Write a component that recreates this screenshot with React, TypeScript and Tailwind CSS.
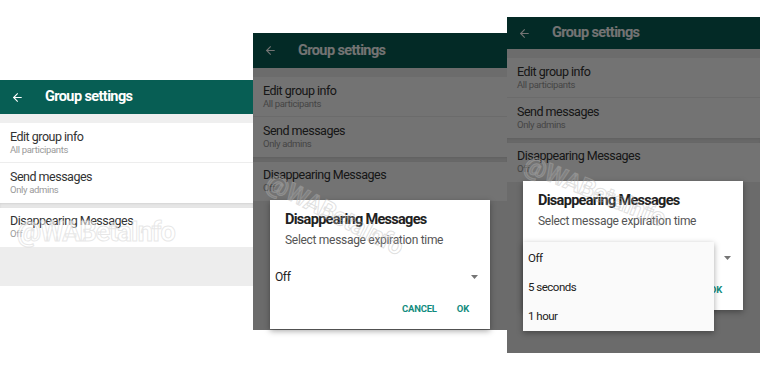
import { ArrowLeft } from "lucide-react";

const font = "font-['Liberation_Sans_Narrow','Roboto',sans-serif]";

function Row({ title, sub, divider }: { title: string; sub: string; divider?: boolean }) {
  return (
    <div className={`h-[40px] pl-[10px] pt-[6px] ${divider ? "border-b border-[#ededed]" : ""}`}>
      <div className="text-[12.5px] leading-[16px] text-[#333333] tracking-[-0.5px]">{title}</div>
      <div className="text-[9.5px] leading-[12px] text-[#9a9a9a] mt-[-1px] tracking-[-0.35px]">{sub}</div>
    </div>
  );
}

function Watermark({ className }: { className: string }) {
  return (
    <div
      className={`absolute whitespace-nowrap font-bold leading-none pointer-events-none z-20 ${className}`}
    >
      @WABetaInfo
    </div>
  );
}

function Dropdown() {
  return (
    <svg width="7" height="4" viewBox="0 0 7 4">
      <polygon points="0,0 7,0 3.5,4" fill="#757575" />
    </svg>
  );
}

function Dialog({ className, menu }: { className: string; menu?: boolean }) {
  return (
    <div className={`absolute w-[220px] h-[129px] bg-white shadow-[0_2px_6px_rgba(0,0,0,0.35)] z-10 ${className}`}>
      <div className="pt-[11px] pl-[15px] text-[14.5px] leading-[18px] font-bold text-[#212121] tracking-[-0.7px]">
        Disappearing Messages
      </div>
      <div className="mt-[3px] pl-[15px] text-[12px] leading-[16px] text-[#555555] tracking-[-0.3px]">
        Select message expiration time
      </div>
      <div className="mt-[17px] h-[24px] pl-[5px] pr-[12px] flex items-center justify-between">
        <span className="text-[12px] text-[#212121] tracking-[-0.4px]">Off</span>
        <Dropdown />
      </div>
      <div className="mt-[10px] h-[20px] pr-[21px] flex items-center justify-end gap-[20px] text-[9.5px] font-bold text-[#128c7e] tracking-[-0.2px]">
        <span>CANCEL</span>
        <span>OK</span>
      </div>
      {menu && (
        <div className="absolute left-0 top-[61px] w-[191px] h-[89px] bg-[#fafafa] shadow-[0_2px_6px_rgba(0,0,0,0.35)] py-[2px]">
          {["Off", "5 seconds", "1 hour"].map((item) => (
            <div key={item} className="h-[29px] flex items-center pl-[5px] text-[11.5px] text-[#212121] tracking-[-0.5px]">
              {item}
            </div>
          ))}
        </div>
      )}
    </div>
  );
}

function Screen({
  className,
  headerH,
  dim,
  children,
}: {
  className: string;
  headerH: string;
  dim?: boolean;
  children?: React.ReactNode;
}) {
  return (
    <div className={`relative shrink-0 flex flex-col bg-[#ededed] ${className}`}>
      <div className={`${headerH} bg-[#075e54] flex items-center pl-[11px] shrink-0`}>
        <ArrowLeft size={13} color="white" strokeWidth={2} />
        <span className="ml-[21px] text-[14.5px] font-bold text-white tracking-[-0.6px]">Group settings</span>
      </div>
      <div className="h-[9px] bg-[#efefef] shrink-0" />
      <div className="bg-white shrink-0">
        <Row title="Edit group info" sub="All participants" divider />
        <Row title="Send messages" sub="Only admins" />
      </div>
      <div className="h-[5px] bg-[#e6e6e6] shadow-[inset_0_1px_2px_rgba(0,0,0,0.08)] shrink-0" />
      <div className="h-[39px] bg-white pl-[10px] pt-[5px] shrink-0">
        <div className="text-[12.5px] leading-[16px] text-[#333333] tracking-[-0.5px]">Disappearing Messages</div>
        <div className="text-[9.5px] leading-[12px] text-[#9a9a9a] mt-[-1px] tracking-[-0.35px]">Off</div>
      </div>
      <div className="flex-1 bg-[#ededed]" />
      {dim && <div className="absolute inset-0 bg-black/[0.55]" />}
      {children}
    </div>
  );
}

export default function App() {
  return (
    <div className={`w-[760px] h-[380px] bg-white overflow-hidden flex items-start ${font}`}>
      <Screen className="mt-[80px] w-[253px] h-[206px]" headerH="h-[34px]">
        <Watermark className="left-[17px] top-[139px] text-[27px] tracking-[-1px] text-white/50 [-webkit-text-stroke:1px_rgba(215,215,215,0.6)]" />
      </Screen>
      <Screen className="mt-[33px] w-[254px] h-[297px]" headerH="h-[35px]" dim>
        <Dialog className="left-[17px] top-[167px]" />
        <Watermark className="left-[82px] top-[181px] -translate-x-1/2 -translate-y-1/2 rotate-[27deg] text-[25px] tracking-[-0.6px] text-white/10 [-webkit-text-stroke:1px_rgba(175,175,175,0.4)]" />
      </Screen>
      <Screen className="mt-[17px] w-[253px] h-[336px]" headerH="h-[32px]" dim>
        <Dialog className="left-[16px] top-[164px]" menu />
        <Watermark className="left-[88px] top-[174px] -translate-x-1/2 -translate-y-1/2 rotate-[22deg] text-[25px] tracking-[-0.6px] text-white/10 [-webkit-text-stroke:1px_rgba(175,175,175,0.4)]" />
      </Screen>
    </div>
  );
}
